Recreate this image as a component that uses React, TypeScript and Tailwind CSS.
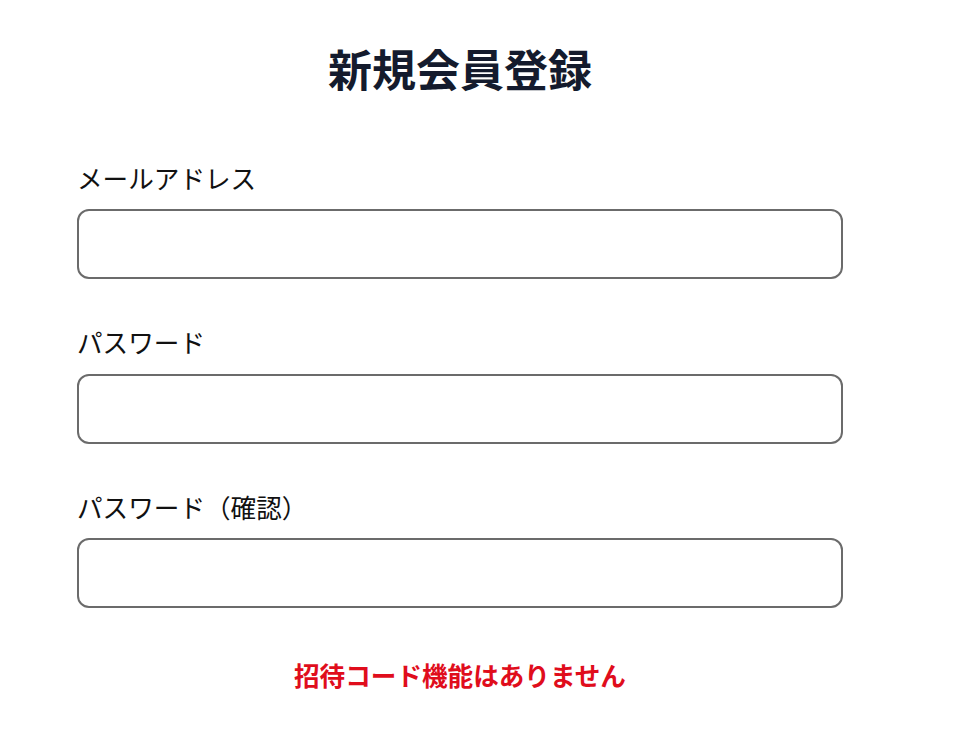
const fields = [
  { label: 'メールアドレス', type: 'email' },
  { label: 'パスワード', type: 'password' },
  { label: 'パスワード（確認）', type: 'password' },
]

export default function App() {
  return (
    <div
      className="min-h-screen w-[920px] bg-white pt-[42px]"
      style={{ fontFamily: '"Noto Sans CJK JP", "Noto Sans", sans-serif' }}
    >
      <div className="mx-auto w-[766px]">
        <h1 className="text-center text-[44px] font-bold leading-[1.2] text-[#141b2d]">
          新規会員登録
        </h1>

        <form className="mt-[64px] flex flex-col gap-[44px]">
          {fields.map(({ label, type }) => (
            <div key={label} className="flex flex-col">
              <label className="mb-[12px] text-[25.6px] leading-[1.5] text-[#111]">
                {label}
              </label>
              <input
                type={type}
                className="h-[70px] w-full rounded-[12px] border-2 border-[#6b6b6b] bg-white px-4 text-[25.6px] outline-none"
              />
            </div>
          ))}
        </form>

        <p className="mt-[48px] text-center text-[25.6px] font-bold leading-[1.5] text-[#e00d1c]">
          招待コード機能はありません
        </p>
      </div>
    </div>
  )
}
